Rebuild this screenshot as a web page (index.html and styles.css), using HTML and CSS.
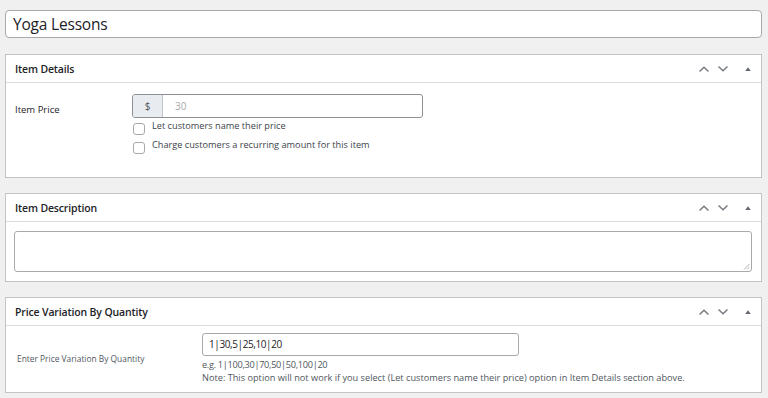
FILE: index.html
```html
<!DOCTYPE html>
<html>
<head>
<meta charset="utf-8">
<link rel="stylesheet" href="styles.css">
</head>
<body>
<div class="page">
  <div class="title-input">Yoga Lessons</div>

  <div class="card card-details">
    <div class="card-head">
      <span class="card-title">Item Details</span>
      <div class="handles">
        <svg class="chev" width="14" height="10" viewBox="0 0 14 10"><path d="M2.5 7.5 L7 3.2 L11.5 7.5" fill="none" stroke="#787c82" stroke-width="1.5"/></svg>
        <svg class="chev" width="14" height="10" viewBox="0 0 14 10"><path d="M2.5 2.5 L7 6.8 L11.5 2.5" fill="none" stroke="#787c82" stroke-width="1.5"/></svg>
        <svg class="tri" width="8" height="8" viewBox="0 0 8 8"><path d="M1.2 6 L4 2.3 L6.8 6 Z" fill="#646970"/></svg>
      </div>
    </div>
    <div class="card-body details-body">
      <div class="label">Item Price</div>
      <div class="field">
        <div class="input-group">
          <span class="addon">$</span>
          <span class="placeholder">30</span>
        </div>
        <div class="check-row check-first"><span class="check"></span><span class="check-text">Let customers name their price</span></div>
        <div class="check-row"><span class="check"></span><span class="check-text">Charge customers a recurring amount for this item</span></div>
      </div>
    </div>
  </div>

  <div class="card">
    <div class="card-head">
      <span class="card-title">Item Description</span>
      <div class="handles">
        <svg class="chev" width="14" height="10" viewBox="0 0 14 10"><path d="M2.5 7.5 L7 3.2 L11.5 7.5" fill="none" stroke="#787c82" stroke-width="1.5"/></svg>
        <svg class="chev" width="14" height="10" viewBox="0 0 14 10"><path d="M2.5 2.5 L7 6.8 L11.5 2.5" fill="none" stroke="#787c82" stroke-width="1.5"/></svg>
        <svg class="tri" width="8" height="8" viewBox="0 0 8 8"><path d="M1.2 6 L4 2.3 L6.8 6 Z" fill="#646970"/></svg>
      </div>
    </div>
    <div class="card-body desc-body">
      <div class="textarea">
        <svg class="grip" width="7" height="7" viewBox="0 0 7 7"><path d="M6.5 1 L1 6.5 M6.5 4 L4 6.5" stroke="#999" stroke-width="0.8"/></svg>
      </div>
    </div>
  </div>

  <div class="card">
    <div class="card-head">
      <span class="card-title">Price Variation By Quantity</span>
      <div class="handles">
        <svg class="chev" width="14" height="10" viewBox="0 0 14 10"><path d="M2.5 7.5 L7 3.2 L11.5 7.5" fill="none" stroke="#787c82" stroke-width="1.5"/></svg>
        <svg class="chev" width="14" height="10" viewBox="0 0 14 10"><path d="M2.5 2.5 L7 6.8 L11.5 2.5" fill="none" stroke="#787c82" stroke-width="1.5"/></svg>
        <svg class="tri" width="8" height="8" viewBox="0 0 8 8"><path d="M1.2 6 L4 2.3 L6.8 6 Z" fill="#646970"/></svg>
      </div>
    </div>
    <div class="card-body qty-body">
      <div class="qty-label">Enter Price Variation By Quantity</div>
      <div class="qty-field">
        <div class="text-input">1|30,5|25,10|20</div>
        <div class="hint hint-first">e.g. 1|100,30|70,50|50,100|20</div>
        <div class="hint">Note: This option will not work if you select (Let customers name their price) option in Item Details section above.</div>
      </div>
    </div>
  </div>
</div>
</body>
</html>
```

FILE: styles.css
```css
html, body {
  margin: 0;
  padding: 0;
  background: #f0f0f1;
  font-family: "Open Sans", "Noto Sans", sans-serif;
  color: #2c3338;
}

.page {
  padding: 10px 6px 0 5px;
}

.title-input {
  height: 26px;
  background: #fff;
  border: 1px solid #a7aaad;
  border-radius: 4px;
  font-size: 15.5px;
  line-height: 27px;
  padding-left: 7px;
  color: #1d2327;
  letter-spacing: -0.2px;
}

.card {
  background: #fff;
  border: 1px solid #c3c4c7;
  margin-top: 15px;
}

.card-details {
  margin-top: 16px;
}

.card-head {
  height: 27px;
  border-bottom: 1px solid #dcdcde;
  display: flex;
  align-items: center;
  padding-left: 9px;
  padding-right: 9px;
}

.card-title {
  flex: 1;
  font-size: 10.5px;
  font-weight: 600;
  color: #1d2327;
  letter-spacing: -0.15px;
}

.handles {
  display: flex;
  align-items: center;
  gap: 5px;
}

.tri {
  margin-left: 9px;
}

.details-body {
  display: flex;
  height: 94px;
  padding-top: 11px;
  box-sizing: border-box;
}

.label {
  width: 117px;
  padding-left: 9px;
  font-size: 9.5px;
  padding-top: 9px;
  color: #1d2327;
}

.field {
  display: flex;
  flex-direction: column;
}

.input-group {
  display: flex;
  width: 289px;
  height: 22px;
  border: 1px solid #8c8f94;
  border-radius: 3px;
  overflow: hidden;
}

.addon {
  width: 29px;
  background: #e8ebef;
  border-right: 1px solid #c3c4c7;
  font-size: 10px;
  display: flex;
  align-items: center;
  justify-content: center;
  color: #50575e;
}

.placeholder {
  padding-left: 12px;
  font-size: 10px;
  line-height: 22px;
  color: #a7aaad;
}

.check-row {
  display: flex;
  align-items: flex-start;
  font-size: 9.2px;
  color: #3c434a;
  height: 19px;
}

.check-first {
  margin-top: 3px;
}

.check-text {
  line-height: 12px;
  position: relative;
  top: -1px;
}

.check {
  width: 10px;
  height: 10px;
  border: 1px solid #a7aaad;
  border-radius: 3px;
  margin-top: 2px;
  margin-left: 1px;
  margin-right: 7px;
  background: #fff;
}

.desc-body {
  padding: 9px 9px 9px 8px;
}

.textarea {
  height: 39px;
  border: 1px solid #a7aaad;
  border-radius: 3px;
  position: relative;
}

.grip {
  position: absolute;
  right: 1px;
  bottom: 1px;
}

.qty-body {
  display: flex;
  padding: 7px 0 8px 0;
}

.qty-label {
  width: 185px;
  padding-left: 11px;
  padding-top: 20px;
  font-size: 8.4px;
  color: #50575e;
}

.qty-field {
  display: flex;
  flex-direction: column;
}

.text-input {
  width: 309px;
  height: 21px;
  border: 1px solid #a7aaad;
  border-radius: 3px;
  padding-left: 6px;
  font-size: 10px;
  line-height: 21px;
  color: #1d2327;
  letter-spacing: -0.4px;
}

.hint {
  font-size: 9.2px;
  color: #50575e;
  line-height: 13px;
}

.hint-first {
  margin-top: 2px;
  letter-spacing: -0.3px;
}
```
